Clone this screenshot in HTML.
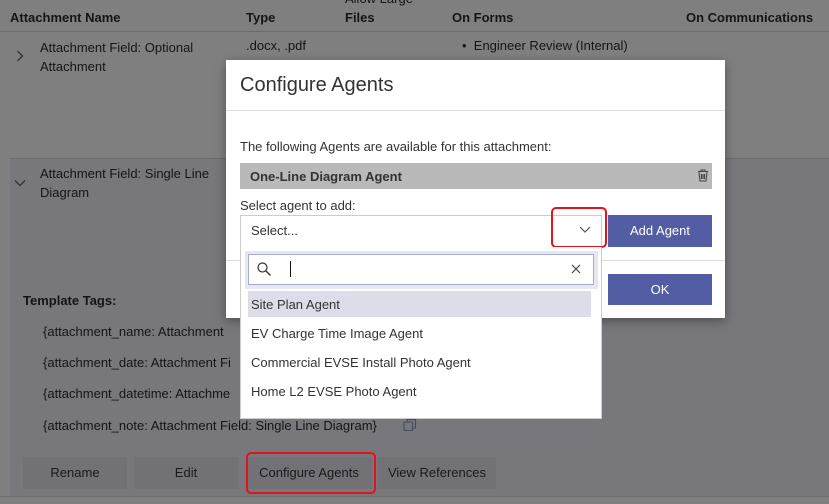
<!DOCTYPE html>
<html><head><meta charset="utf-8"><style>
*{box-sizing:border-box;margin:0;padding:0}
body{width:829px;height:504px;overflow:hidden;background:#7f7f7f;font-family:"Liberation Sans",sans-serif;font-size:13px;color:#151515;position:relative}
.a{position:absolute;white-space:nowrap}
.b{font-weight:bold}
.btn{position:absolute;background:#727276;text-align:center;line-height:32px;height:32px;color:#1a1a1a}
</style></head><body>
<div class="a" style="left:345px;top:-9px">Allow Large</div>
<div class="a b" style="left:10px;top:10px">Attachment Name</div>
<div class="a b" style="left:246px;top:10px">Type</div>
<div class="a b" style="left:345px;top:10px">Files</div>
<div class="a b" style="left:452px;top:10px">On Forms</div>
<div class="a b" style="left:686px;top:10px">On Communications</div>
<div class="a" style="left:0;top:31px;width:829px;height:1px;background:#6c6c6c"></div>
<svg class="a" style="left:16px;top:50px" width="8" height="12"><path d="M1.5 1l5 5-5 5" stroke="#222" fill="none" stroke-width="1.1"/></svg>
<div class="a" style="left:40px;top:38px;line-height:19px">Attachment Field: Optional<br>Attachment</div>
<div class="a" style="left:246px;top:38px">.docx, .pdf</div>
<div class="a" style="left:462px;top:38px">• &nbsp;Engineer Review (Internal)</div>
<div class="a" style="left:10px;top:158px;width:819px;height:338px;background:#78777c;border-top:1px solid #6c6c6c"></div>
<div class="a" style="left:0;top:496px;width:829px;height:1px;background:#6c6c6c"></div>
<svg class="a" style="left:14px;top:179px" width="12" height="8"><path d="M1 1.5l5 5 5-5" stroke="#222" fill="none" stroke-width="1.1"/></svg>
<div class="a" style="left:40px;top:164px;line-height:19px">Attachment Field: Single Line<br>Diagram</div>
<div class="a b" style="left:23px;top:293px">Template Tags:</div>
<div class="a" style="left:43px;top:324px">{attachment_name: Attachment</div>
<div class="a" style="left:43px;top:355px">{attachment_date: Attachment Fi</div>
<div class="a" style="left:43px;top:386px">{attachment_datetime: Attachme</div>
<div class="a" style="left:43px;top:418px">{attachment_note: Attachment Field: Single Line Diagram}</div>
<svg class="a" style="left:403px;top:418px" width="14" height="14"><rect x="1" y="4" width="8.5" height="8.5" rx="1" stroke="#444a5e" fill="none" stroke-width="1.1"/><path d="M4 3.5V1.5h8.5V10H10" stroke="#444a5e" fill="none" stroke-width="1.1"/></svg>
<div class="btn" style="left:23px;top:457px;width:104px">Rename</div>
<div class="btn" style="left:134px;top:457px;width:104px">Edit</div>
<div class="btn" style="left:246px;top:457px;width:126px">Configure Agents</div>
<div class="btn" style="left:378px;top:457px;width:118px">View References</div>
<div class="a" style="left:246px;top:452px;width:130px;height:42px;border:2px solid #e0141a;border-radius:5px"></div>

<div class="a" style="left:226px;top:60px;width:499px;height:258px;background:#fff;box-shadow:0 3px 10px rgba(0,0,0,.35)"></div>
<div class="a" style="left:240px;top:74px;font-size:20px;color:#333">Configure Agents</div>
<div class="a" style="left:226px;top:110px;width:499px;height:1px;background:#ddd"></div>
<div class="a" style="left:240px;top:139px;color:#333">The following Agents are available for this attachment:</div>
<div class="a" style="left:240px;top:163px;width:472px;height:26px;background:#b9b9b9"></div>
<div class="a b" style="left:250px;top:169px;color:#333">One-Line Diagram Agent</div>
<svg class="a" style="left:697px;top:169px" width="12" height="13" viewBox="0 0 12 13"><path d="M1 2.5h10M4 2.5V1h4v1.5M2 3l1 9h6l1-9M4.5 5v5M6 5v5M7.5 5v5" stroke="#444" fill="none" stroke-width="1.1"/></svg>
<div class="a" style="left:240px;top:198px;color:#333">Select agent to add:</div>
<div class="a" style="left:240px;top:215px;width:362px;height:33px;border:1px solid #ccc;background:#fff"></div>
<div class="a" style="left:251px;top:223px;color:#333">Select...</div>
<svg class="a" style="left:579px;top:226px" width="12" height="8"><path d="M1 1l5 5 5-5" stroke="#555" fill="none" stroke-width="1.2"/></svg>
<div class="a" style="left:551px;top:207px;width:56px;height:41px;border:2px solid #e0141a;border-radius:5px"></div>
<div class="a" style="left:608px;top:215px;width:104px;height:32px;background:#535da3;color:#fff;text-align:center;line-height:32px">Add Agent</div>
<div class="a" style="left:226px;top:260px;width:499px;height:1px;background:#ddd"></div>
<div class="a" style="left:608px;top:274px;width:104px;height:31px;background:#535da3;color:#fff;text-align:center;line-height:31px">OK</div>

<div class="a" style="left:240px;top:247px;width:362px;height:172px;background:#fff;border:1px solid #ccc;border-top:none"></div>
<div class="a" style="left:245px;top:251px;width:353px;height:38px;background:#e6e7f1"></div>
<div class="a" style="left:248px;top:254px;width:346px;height:31px;background:#fff;border:1px solid #a7abd4"></div>
<svg class="a" style="left:256px;top:261px" width="16" height="16"><circle cx="6.5" cy="6.5" r="4.5" stroke="#333" fill="none" stroke-width="1.2"/><path d="M10 10l4.5 4.5" stroke="#333" stroke-width="1.4"/></svg>
<div class="a" style="left:290px;top:261px;width:1px;height:16px;background:#111"></div>
<svg class="a" style="left:571px;top:264px" width="10" height="10"><path d="M1 1l8 8M9 1l-8 8" stroke="#444" stroke-width="1.2"/></svg>
<div class="a" style="left:248px;top:291px;width:343px;height:26px;background:#dcdde9"></div>
<div class="a" style="left:251px;top:297px;color:#333">Site Plan Agent</div>
<div class="a" style="left:251px;top:326px;color:#333">EV Charge Time Image Agent</div>
<div class="a" style="left:251px;top:355px;color:#333">Commercial EVSE Install Photo Agent</div>
<div class="a" style="left:251px;top:384px;color:#333">Home L2 EVSE Photo Agent</div>
</body></html>
